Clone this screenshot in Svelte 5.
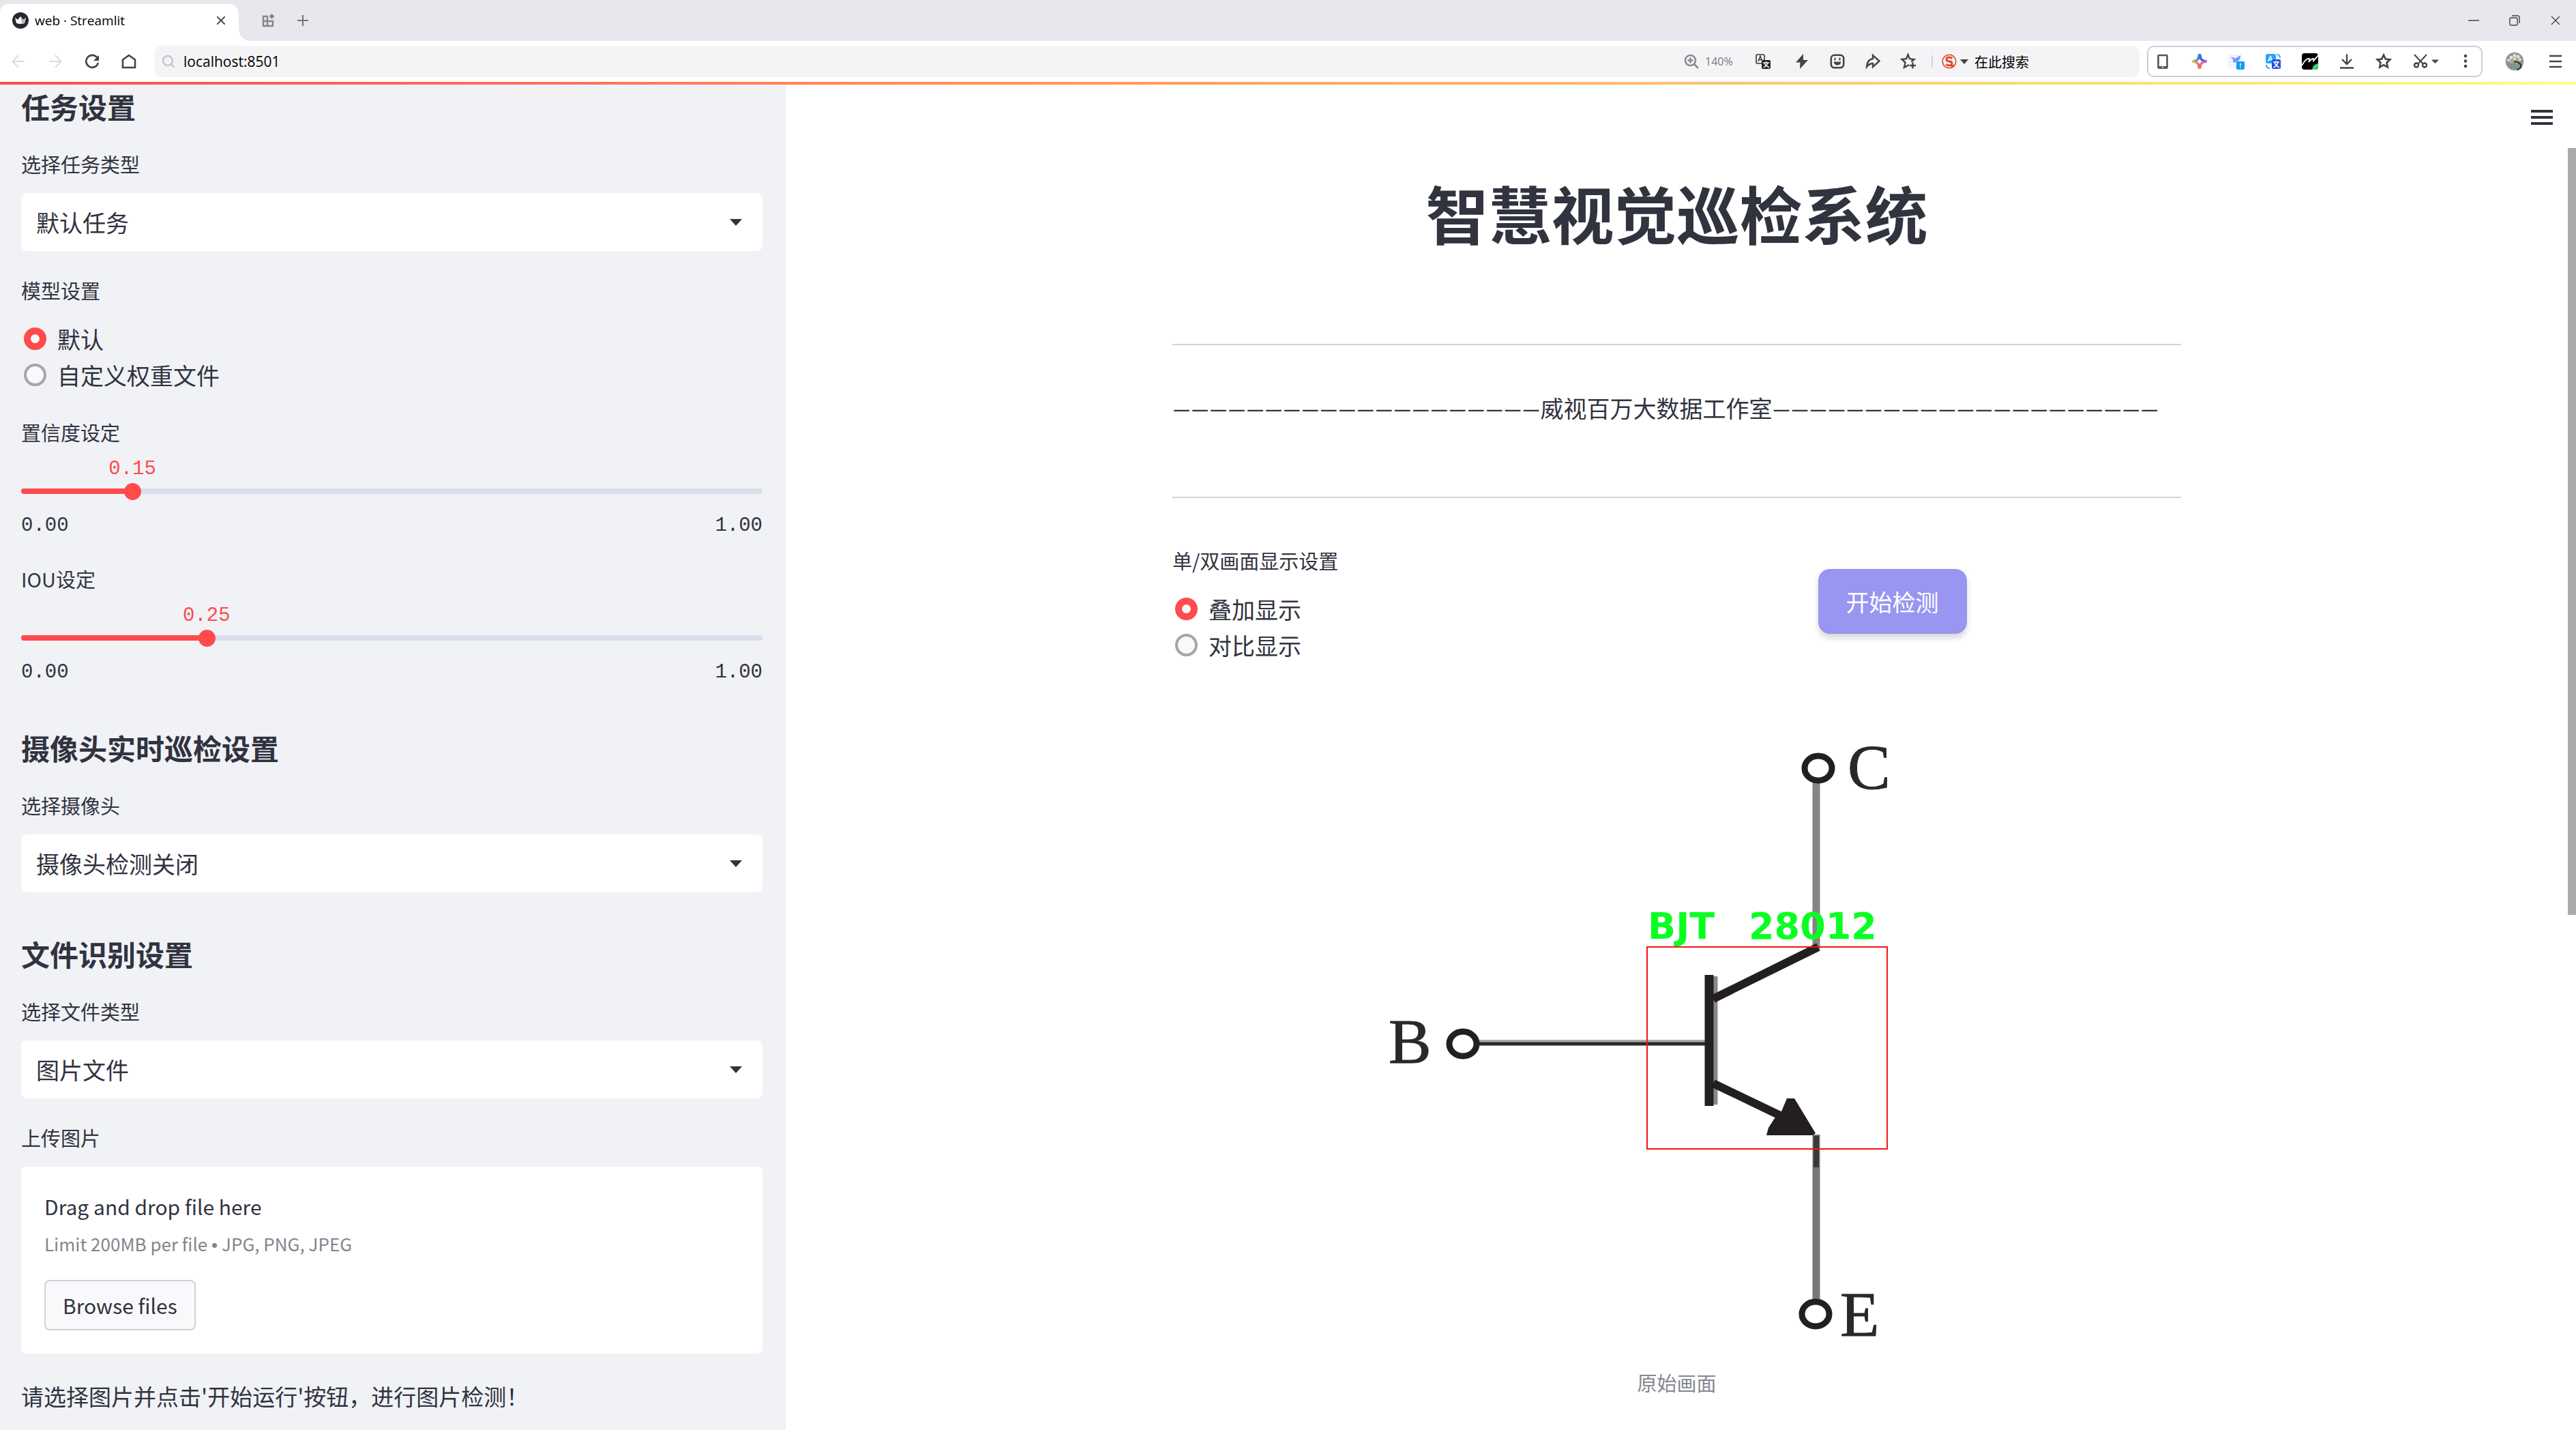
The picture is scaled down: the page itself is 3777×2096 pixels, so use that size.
<script lang="ts">
  let address = $state('localhost:8501');
  let modelSource = $state('默认');
  let displayMode = $state('叠加显示');
  let sliders = $state([
    { id: 'conf', label: '置信度设定', value: 0.15 },
    { id: 'iou', label: 'IOU设定', value: 0.25 }
  ]);
  const modelOptions = ['默认', '自定义权重文件'];
  const displayOptions = ['叠加显示', '对比显示'];
  const dash = '—';
</script>

{#snippet picker(id: string, label: string, value: string)}
  <div class="field">
    <label class="label" for={id}>{label}</label>
    <div class="picker">
      <select {id}><option>{value}</option></select>
      <svg class="caret" width="18" height="10" viewBox="0 0 18 10"><path d="M0 0h18L9 10z" fill="#31333f" /></svg>
    </div>
  </div>
{/snippet}

<div class="window">
  <header>
    <div class="tabs">
      <div class="tab">
        <svg width="24" height="24" viewBox="0 0 24 24"><circle cx="12" cy="12" r="12" fill="#262730" /><path d="M4 8l4 3 4-5 4 5 4-3-2 8q-6 2-12 0z" fill="#fff" /><path d="M12 6l4 5 4-3-2 8q-2 .8-4 1z" fill="#bbb" /></svg>
        <span>web · Streamlit</span>
        <button aria-label="关闭标签页"><svg width="12" height="12" viewBox="0 0 12 12"><path d="M0 0l12 12M12 0L0 12" stroke="#333" stroke-width="1.6" /></svg></button>
      </div>
      <button class="strip" aria-label="标签组"><svg width="20" height="20" viewBox="0 0 20 20"><g fill="none" stroke="#85868a" stroke-width="2.4"><path d="M2 4h6v14H2zM2 11h14v7H8v-7" /></g><path d="M14.500 0l4 4-4 4-4-4z" fill="#85868a" /></svg></button>
      <button class="strip" aria-label="新建标签页"><svg width="16" height="16" viewBox="0 0 16 16"><path d="M8 0v16M0 8h16" stroke="#77787c" stroke-width="2.200" /></svg></button>
      <div class="controls">
        <button aria-label="最小化"><svg width="16" height="16" viewBox="0 0 16 16"><path d="M0 8h16" stroke="#444" stroke-width="1.500" /></svg></button>
        <button aria-label="还原"><svg width="16" height="16" viewBox="0 0 16 16"><g fill="none" stroke="#444" stroke-width="1.400"><rect x="1" y="4" width="11" height="11" rx="2" /><path d="M4 1h8q3 0 3 3v8" /></g></svg></button>
        <button aria-label="关闭"><svg width="14" height="14" viewBox="0 0 14 14"><path d="M1 1l12 12M13 1L1 13" stroke="#444" stroke-width="1.400" /></svg></button>
      </div>
    </div>

    <div class="toolbar">
      <button class="nav" aria-label="后退"><svg width="20" height="20" viewBox="0 0 20 20"><path d="M19 10H2M10 1l-8.500 9L10 19" fill="none" stroke="#dcdcde" stroke-width="2" /></svg></button>
      <button class="nav" aria-label="前进"><svg width="20" height="20" viewBox="0 0 20 20"><path d="M1 10h17M10 1l8.500 9L10 19" fill="none" stroke="#dcdcde" stroke-width="2" /></svg></button>
      <button class="nav" aria-label="刷新"><svg width="22" height="22" viewBox="0 0 22 22"><path d="M18.500 5.500A9 9 0 1 0 20 13" fill="none" stroke="#444" stroke-width="2.600" /><path d="M21 2v8h-8z" fill="#444" /></svg></button>
      <button class="nav" aria-label="主页"><svg width="22" height="22" viewBox="0 0 22 22"><path d="M2 8.500L11 2l9 6.500V20H2z" fill="none" stroke="#444" stroke-width="2.600" /></svg></button>

      <div class="address">
        <svg width="20" height="20" viewBox="0 0 20 20"><g fill="none" stroke="#c4c5c9" stroke-width="2.400"><circle cx="9" cy="9" r="7" /><path d="M14 14l4.500 4.500" /></g></svg>
        <input class="url" aria-label="地址" bind:value={address} />
        <button class="zoom"><svg width="22" height="22" viewBox="0 0 22 22"><g fill="none" stroke="#8a8b8f" stroke-width="2.600"><circle cx="9.500" cy="9.500" r="7.500" /><path d="M15 15l6 6M9.500 5.500v8M5.500 9.500h8" /></g></svg>140%</button>
        <button class="act far" aria-label="翻译"><svg width="24" height="24" viewBox="0 0 24 24"><rect x="2" y="2" width="12" height="13" rx="2" fill="none" stroke="#333" stroke-width="1.600" /><path d="M5 12l3-8 3 8M6 9.500h4" fill="none" stroke="#333" stroke-width="1.400" /><rect x="10" y="10" width="13" height="13" rx="2" fill="#222" /><path d="M12 14h9M16.500 12v2M19 14q-1 4-6.500 7M14 14q1 4 7 7" fill="none" stroke="#fff" stroke-width="1.400" /></svg></button>
        <button class="act" aria-label="加速"><svg width="22" height="22" viewBox="0 0 22 22"><path d="M13 0L2 12.500h6.500L8 22 20 9h-7z" fill="#444" /></svg></button>
        <button class="act" aria-label="表情"><svg width="22" height="22" viewBox="0 0 22 22"><rect x="1.800" y="1.800" width="18.400" height="18.400" rx="5" fill="none" stroke="#444" stroke-width="2.600" /><path d="M7.500 5.500v4M14.500 5.500v4" stroke="#444" stroke-width="2" /><path d="M5.500 11.500h11q-1 5-5.500 5t-5.500-5z" fill="#444" /></svg></button>
        <button class="act" aria-label="分享"><svg width="24" height="24" viewBox="0 0 24 24"><path d="M12 3v5Q4 9 3 20q4-5 9-5v5l9.500-8.500z" fill="none" stroke="#444" stroke-width="2.400" /></svg></button>
        <button class="act" aria-label="收藏"><svg width="24" height="24" viewBox="0 0 24 24"><path d="M13 17l-7 4 1.500-7.500L2.500 9l6.500-.8L11.500 2 14 8.200l6.500.8-4 3.500" fill="none" stroke="#444" stroke-width="2.400" /><path d="M18.500 13.500v9M14 18h9" stroke="#444" stroke-width="2.400" /></svg></button>
        <div class="search">
          <svg width="22" height="22" viewBox="0 0 22 22"><circle cx="11" cy="11" r="9.800" fill="none" stroke="#e2482c" stroke-width="1.600" /><path d="M15 7q-1-2-4-2-4 0-4 3t4 3 4 3-4 3q-3 0-4.500-2M14 19l4-2" fill="none" stroke="#e2482c" stroke-width="2.800" /></svg>
          <svg width="12" height="7" viewBox="0 0 12 7"><path d="M0 0h12L6 7z" fill="#444" /></svg>
          <input aria-label="搜索" value="在此搜索" />
        </div>
      </div>

      <div class="extensions">
        <button aria-label="手机"><svg width="24" height="24" viewBox="0 0 24 24"><rect x="5.500" y="3" width="13" height="18.500" rx="1" fill="none" stroke="#555" stroke-width="2.600" /><path d="M5 19h14v3.500H5z" fill="#555" /><path d="M10.500 20.500h3" stroke="#fff" stroke-width="1" /></svg></button>
        <button aria-label="助手"><svg width="24" height="24" viewBox="0 0 24 24"><defs><linearGradient id="spark" x1="0" y1="0" x2="1" y2="0"><stop offset="0" stop-color="#b6de4a" /><stop offset="0.400" stop-color="#3a8fd8" /><stop offset="0.650" stop-color="#2f62d8" /><stop offset="1" stop-color="#c05af0" /></linearGradient><linearGradient id="ember" x1="0" y1="0" x2="1" y2="0"><stop offset="0" stop-color="#f0c04a" /><stop offset="0.450" stop-color="#f4705a" /><stop offset="1" stop-color="#d05ae0" /></linearGradient></defs><path d="M10 1h4l1.500 6q.5 1.500 2 2L23 10.500V12H1v-1.500L6.500 9q1.500-.5 2-2z" fill="url(#spark)" /><path d="M1 12h22v1.500L17.500 15q-1.500.5-2 2L14 23h-4l-1.500-6q-.5-1.500-2-2L1 13.500z" fill="url(#ember)" /><path d="M12 8.500l3.500 3.500-3.500 3.500L8.500 12z" fill="#fff" /></svg></button>
        <button aria-label="迅雷"><svg width="24" height="24" viewBox="0 0 24 24"><rect x="0" y="2" width="20" height="20" rx="3" fill="#f1f4fe" /><path d="M3 6q5-1 7 2l8-5q0 8-7 10l-4 1q1-2 0-4 0-3-4-4z" fill="#7d92f5" /><rect x="12" y="12" width="12" height="12" rx="2" fill="#0a9cf0" /><path d="M18 14.500v4.500M18 20.500v1.500" stroke="#fff" stroke-width="1.400" /></svg></button>
        <button aria-label="网页翻译"><svg width="24" height="24" viewBox="0 0 24 24"><rect x="1" y="1" width="15" height="14" rx="3" fill="#25a4f8" /><path d="M4.500 12L8 4.500l3.500 7.500M6 9.500h4" fill="none" stroke="#fff" stroke-width="1.500" /><path d="M17 2q5 0 5 5M2 17q0 5 5 5" fill="none" stroke="#35aaf8" stroke-width="2" /><rect x="10" y="9" width="13" height="14" rx="2" fill="#2450d8" /><path d="M12 13h9M16.500 11v2M19 13q-1 5-6.500 8M14 13q1 5 7 8" fill="none" stroke="#fff" stroke-width="1.500" /></svg></button>
        <button aria-label="笔记"><svg width="24" height="24" viewBox="0 0 24 24"><rect width="24" height="24" rx="4" fill="#000" /><path d="M15 24q1-8 9-9v5q0 4-4 4z" fill="#36d16c" /><path d="M0 18Q6 7 11 8q1 1-1 5 5-6 7-5v3q3-3 7-8" fill="none" stroke="#fff" stroke-width="1.800" /></svg></button>
        <button aria-label="下载"><svg width="24" height="24" viewBox="0 0 24 24"><path d="M12 1.500v15M5 9l7 7 7-7M2 21.500h20" fill="none" stroke="#444" stroke-width="2.400" /></svg></button>
        <button aria-label="书签"><svg width="24" height="24" viewBox="0 0 24 24"><path d="M12 2.500l2.800 6 6.500.8-4.800 4.500 1.300 6.700L12 17.200l-5.800 3.300 1.300-6.700L2.700 9.300l6.500-.8z" fill="none" stroke="#444" stroke-width="2.600" /></svg></button>
        <button aria-label="截图"><svg width="39" height="24" viewBox="0 0 39 24"><g fill="none" stroke="#444"><path d="M3 2l13 14M21 2L8 16" stroke-width="2" /><circle cx="6" cy="17.500" r="3" stroke-width="2.400" /><circle cx="18" cy="17.500" r="3" stroke-width="2.400" /></g><path d="M28 9.500h11L33.500 15z" fill="#444" /></svg></button>
        <button aria-label="更多"><svg width="18" height="24" viewBox="3 0 18 24"><g fill="#444"><circle cx="12" cy="4" r="2.300" /><circle cx="12" cy="11.500" r="2.300" /><circle cx="12" cy="19" r="2.300" /></g></svg></button>
      </div>

      <div class="account">
        <button aria-label="用户"><svg width="28" height="28" viewBox="0 0 28 28"><circle cx="14" cy="14" r="13.500" fill="#84938f" stroke="#dfe3e2" /><g fill="#a9ac94"><circle cx="9" cy="13" r="4" /><circle cx="15" cy="13" r="4" /><circle cx="20" cy="12" r="3" /></g><path d="M13 15q6-2 10 4 2 4-3 6" fill="none" stroke="#3d3028" stroke-width="2.200" /><path d="M17 24.500h5l-2 2.500h-3z" fill="#2c4a86" /><g fill="#e8dfd6"><circle cx="9" cy="8" r="2.500" /><circle cx="14" cy="5.500" r="2.500" /><circle cx="19" cy="7" r="2.500" /><circle cx="22" cy="11" r="2" /><circle cx="5" cy="12" r="2" /><circle cx="14" cy="10" r="2" /></g></svg></button>
        <button aria-label="菜单"><svg width="18" height="20" viewBox="0 0 18 20"><path d="M0 2h18M0 10h18M0 18h18" stroke="#444" stroke-width="2.600" /></svg></button>
      </div>
    </div>
    <div class="rainbow"></div>
  </header>

  <div class="body">
    <aside>
      <h2>任务设置</h2>
      {@render picker('task', '选择任务类型', '默认任务')}
      <fieldset>
        <legend class="label">模型设置</legend>
        {#each modelOptions as option}
          <label class="radio"><input type="radio" name="model" value={option} bind:group={modelSource} />{option}</label>
        {/each}
      </fieldset>
      {#each sliders as slider}
        <div class="slider">
          <label class="label" for={slider.id}>{slider.label}</label>
          <div class="value"><output for={slider.id} style:left="{slider.value * 100}%">{slider.value.toFixed(2)}</output></div>
          <div class="track">
            <div class="rail"><div class="fill" style:width="{slider.value * 100}%"></div></div>
            <input id={slider.id} type="range" min="0" max="1" step="0.01" bind:value={slider.value} />
          </div>
          <div class="ends"><span>0.00</span><span>1.00</span></div>
        </div>
      {/each}
      <h2>摄像头实时巡检设置</h2>
      {@render picker('camera', '选择摄像头', '摄像头检测关闭')}
      <h2>文件识别设置</h2>
      {@render picker('filetype', '选择文件类型', '图片文件')}
      <div class="field">
        <div class="label">上传图片</div>
        <section class="drop">
          <p class="drag">Drag and drop file here</p>
          <p class="limit">Limit 200MB per file <span>•</span> JPG, PNG, JPEG</p>
          <button>Browse files</button>
        </section>
      </div>
      <p class="text">请选择图片并点击'开始运行'按钮，进行图片检测！</p>
    </aside>

    <main>
      <button class="burger" aria-label="主菜单"><svg width="32" height="22" viewBox="0 0 32 22"><path d="M0 2h32M0 11h32M0 20h32" stroke="#31333f" stroke-width="4" /></svg></button>
      <div class="column">
        <h1>智慧视觉巡检系统</h1>
        <hr />
        <p class="studio"><span>{dash.repeat(20)}</span>威视百万大数据工作室<span>{dash.repeat(21)}</span></p>
        <hr />
        <div class="split">
          <fieldset>
            <legend class="label">单/双画面显示设置</legend>
            {#each displayOptions as option}
              <label class="radio"><input type="radio" name="display" value={option} bind:group={displayMode} />{option}</label>
            {/each}
          </fieldset>
          <div><button class="start">开始检测</button></div>
        </div>
        <figure>
          <svg viewBox="-281 -55 1479 995" role="img" aria-label="BJT">
            <g stroke="#858585" stroke-width="11">
              <path d="M663 88v244" />
              <path d="M663 604v244" stroke="#777" />
            </g>
            <path d="M663 606v46" stroke="#3a3839" stroke-width="8" />
            <path d="M166 467h334" stroke="#aaa" stroke-width="4" />
            <path d="M166 471h334" stroke="#2b292a" stroke-width="5" />
            <path d="M515 372v188" stroke="#8a8889" stroke-width="7" />
            <path d="M506 370v192" stroke="#231f20" stroke-width="13" />
            <path d="M512 405l154-76M512 529l100 48" stroke="#231f20" stroke-width="12" />
            <path d="M620 551h11l31 51-4 3h-68l3-11 9-14 10-10z" fill="#231f20" />
            <g fill="#fff" stroke="#231f20" stroke-width="9">
              <ellipse cx="666" cy="67" rx="20" ry="18" />
              <ellipse cx="145" cy="471" rx="20" ry="18" />
              <ellipse cx="662" cy="867" rx="20" ry="18" />
            </g>
            <g class="pin">
              <text x="709" y="97">C</text>
              <text x="36" y="499">B</text>
              <text x="698" y="899">E</text>
            </g>
            <rect x="415" y="329" width="352" height="296" fill="none" stroke="#f51414" stroke-width="2" />
            <g class="tag">
              <text x="416" y="317">BJT</text>
              <text x="564" y="317">28012</text>
            </g>
          </svg>
          <figcaption>原始画面</figcaption>
        </figure>
      </div>
    </main>
    <div class="scroll"><div class="thumb"></div></div>
  </div>
</div>

<style>
  :global(body) { margin: 0; }
  .window {
    min-height: 100vh;
    display: flex;
    flex-direction: column;
    background: #fff;
    color: #31333f;
    font-family: 'Noto Sans CJK SC', sans-serif;
    font-size: 34px;
  }
  button, input, select { font: inherit; color: inherit; margin: 0; padding: 0; border: 0; background: none; outline: none; }
  button { display: flex; align-items: center; justify-content: center; cursor: pointer; }
  svg { display: block; flex: none; }
  p, h1, h2, figure { margin: 0; }

  header { font-family: 'Open Sans', 'Noto Sans CJK SC', sans-serif; font-size: 19px; color: #000; }
  .tabs { display: flex; align-items: center; height: 60px; background: #e7e8ed; }
  .tab {
    position: relative;
    box-sizing: border-box;
    align-self: flex-end;
    display: flex;
    align-items: center;
    width: 350px;
    height: 54px;
    padding: 0 20px 6px 18px;
    margin-right: 19px;
    background: #fff;
    border-radius: 12px 14px 0 0;
  }
  .tab span { flex: 1; margin-left: 9px; }
  .tab::after {
    content: '';
    position: absolute;
    left: 100%;
    bottom: 0;
    width: 16px;
    height: 16px;
    background: radial-gradient(circle at 100% 0, transparent 15px, #fff 16px);
  }
  .strip { width: 50px; height: 50px; }
  .controls { display: flex; margin-left: auto; }
  .controls button, .account button { width: 60px; height: 50px; }

  .toolbar { display: flex; align-items: center; height: 60px; background: #fff; }
  .nav { width: 54px; height: 46px; }
  .address {
    flex: 1;
    display: flex;
    align-items: center;
    height: 46px;
    margin: 0 11px 0 10px;
    padding-left: 11px;
    border-radius: 12px;
    background: #f4f4f7;
  }
  .url { flex: 1; min-width: 0; margin-left: 12px; font-size: 21px; }
  .zoom { justify-content: flex-start; gap: 9px; width: 90px; color: #77787c; font-size: 16px; }
  .act { width: 52px; height: 46px; }
  .far { margin-right: 5px; }
  .search { display: flex; align-items: center; gap: 5px; margin-left: 8px; }
  .search::before { content: ''; width: 2px; height: 18px; margin-right: 8px; background: #d4d5da; }
  .search input { width: 242px; margin-left: 4px; font-size: 20px; }
  .extensions {
    box-sizing: border-box;
    display: flex;
    align-items: center;
    gap: 30px;
    width: 492px;
    height: 46px;
    padding-left: 9px;
    border: 2px solid #cdd0d8;
    border-radius: 10px;
  }
  .account { display: flex; margin-left: 17px; }
  .rainbow { height: 4px; background: linear-gradient(90deg, #ff4b4b, #fffd80); }

  .body { flex: 1; display: flex; }
  aside {
    box-sizing: border-box;
    flex: none;
    width: 1152px;
    padding: 7px 34px 20px 31px;
    display: flex;
    flex-direction: column;
    gap: 35px;
    background: #f0f2f6;
  }
  h2 { font-size: 42px; line-height: 50px; font-weight: 700; margin: 30px 0 2px; }
  h2:first-child { margin-top: 0; }
  .label { display: block; padding: 0; font-size: 29px; line-height: 44px; }
  .field .label { margin-bottom: 21px; }
  fieldset .label { margin-bottom: 23px; }
  .picker { display: grid; align-items: center; }
  .picker > * { grid-area: 1 / 1; }
  select { appearance: none; width: 100%; height: 85px; padding: 0 60px 0 22px; border-radius: 8px; background: #fff; }
  .caret { justify-self: end; margin-right: 30px; pointer-events: none; }
  fieldset { margin: 0; padding: 0; border: 0; min-width: 0; }
  .radio { display: flex; align-items: center; height: 53px; padding-left: 4px; }
  .radio input {
    appearance: none;
    box-sizing: border-box;
    width: 33px;
    height: 33px;
    margin-right: 16px;
    border: 4px solid #a5a6aa;
    border-radius: 50%;
    background: #f9f9fb;
  }
  .radio input:checked { border: 10px solid #ff4b4b; }
  .value { position: relative; height: 38px; margin-top: 13px; }
  .value output { position: absolute; transform: translateX(-50%); color: #ff4b4b; }
  .value output, .ends { font-family: 'Liberation Mono', monospace; font-size: 29px; line-height: 40px; }
  .track { display: grid; align-items: center; height: 28px; }
  .track > * { grid-area: 1 / 1; }
  .rail { height: 8px; border-radius: 4px; background: #dadeea; overflow: hidden; }
  .fill { height: 100%; background: #ff4b4b; }
  .track input { appearance: none; height: 25px; margin: 0 -12px; }
  .track input::-webkit-slider-thumb { appearance: none; width: 25px; height: 25px; border-radius: 50%; background: #ff4b4b; }
  .ends { display: flex; justify-content: space-between; margin-top: 17px; }
  .drop { padding: 34px; border-radius: 8px; background: #fff; }
  .drag { font-size: 30px; line-height: 48px; }
  .limit { margin: 11px 0 31px; font-size: 26px; line-height: 40px; color: #83858c; }
  .limit span { font-family: 'Liberation Sans', sans-serif; }
  .drop button { height: 74px; padding: 0 25px; border: 2px solid #d0d1d4; border-radius: 8px; background: #f9f9fb; font-size: 30px; }
  .text { font-size: 33px; line-height: 54px; }

  main { position: relative; flex: 1; padding: 132px 64px 40px; }
  .burger { position: absolute; top: 37px; right: 22px; }
  .column { max-width: 1479px; margin: 0 auto; }
  h1 { font-size: 92px; line-height: 110px; font-weight: 700; text-align: center; margin-bottom: 138px; }
  hr { height: 2px; margin: 0; border: 0; background: #d2d2d6; }
  .studio { margin: 65px 0 102px; line-height: 54px; white-space: nowrap; }
  .studio span { font-family: Lato, sans-serif; }
  .split { display: grid; grid-template-columns: 64fr 36fr; margin: 69px 0 32px; }
  .start {
    width: 218px;
    height: 95px;
    margin-top: 35px;
    border-radius: 17px;
    background: #9896f1;
    color: #fff;
    box-shadow: 0 6px 10px rgba(0, 0, 0, 0.16);
  }
  figure svg { width: 100%; }
  .pin { font-family: 'Liberation Serif', serif; font-size: 94px; fill: #2b2829; stroke: #2b2829; stroke-width: 1px; }
  .tag { font-family: 'DejaVu Sans', sans-serif; font-size: 54px; font-weight: 700; fill: #0aff22; }
  figcaption { margin-top: 5px; font-size: 29px; line-height: 44px; text-align: center; color: #85868e; }

  .scroll { flex: none; width: 12px; padding-top: 93px; }
  .thumb { height: 1124px; background: #a9a9ae; }
</style>
